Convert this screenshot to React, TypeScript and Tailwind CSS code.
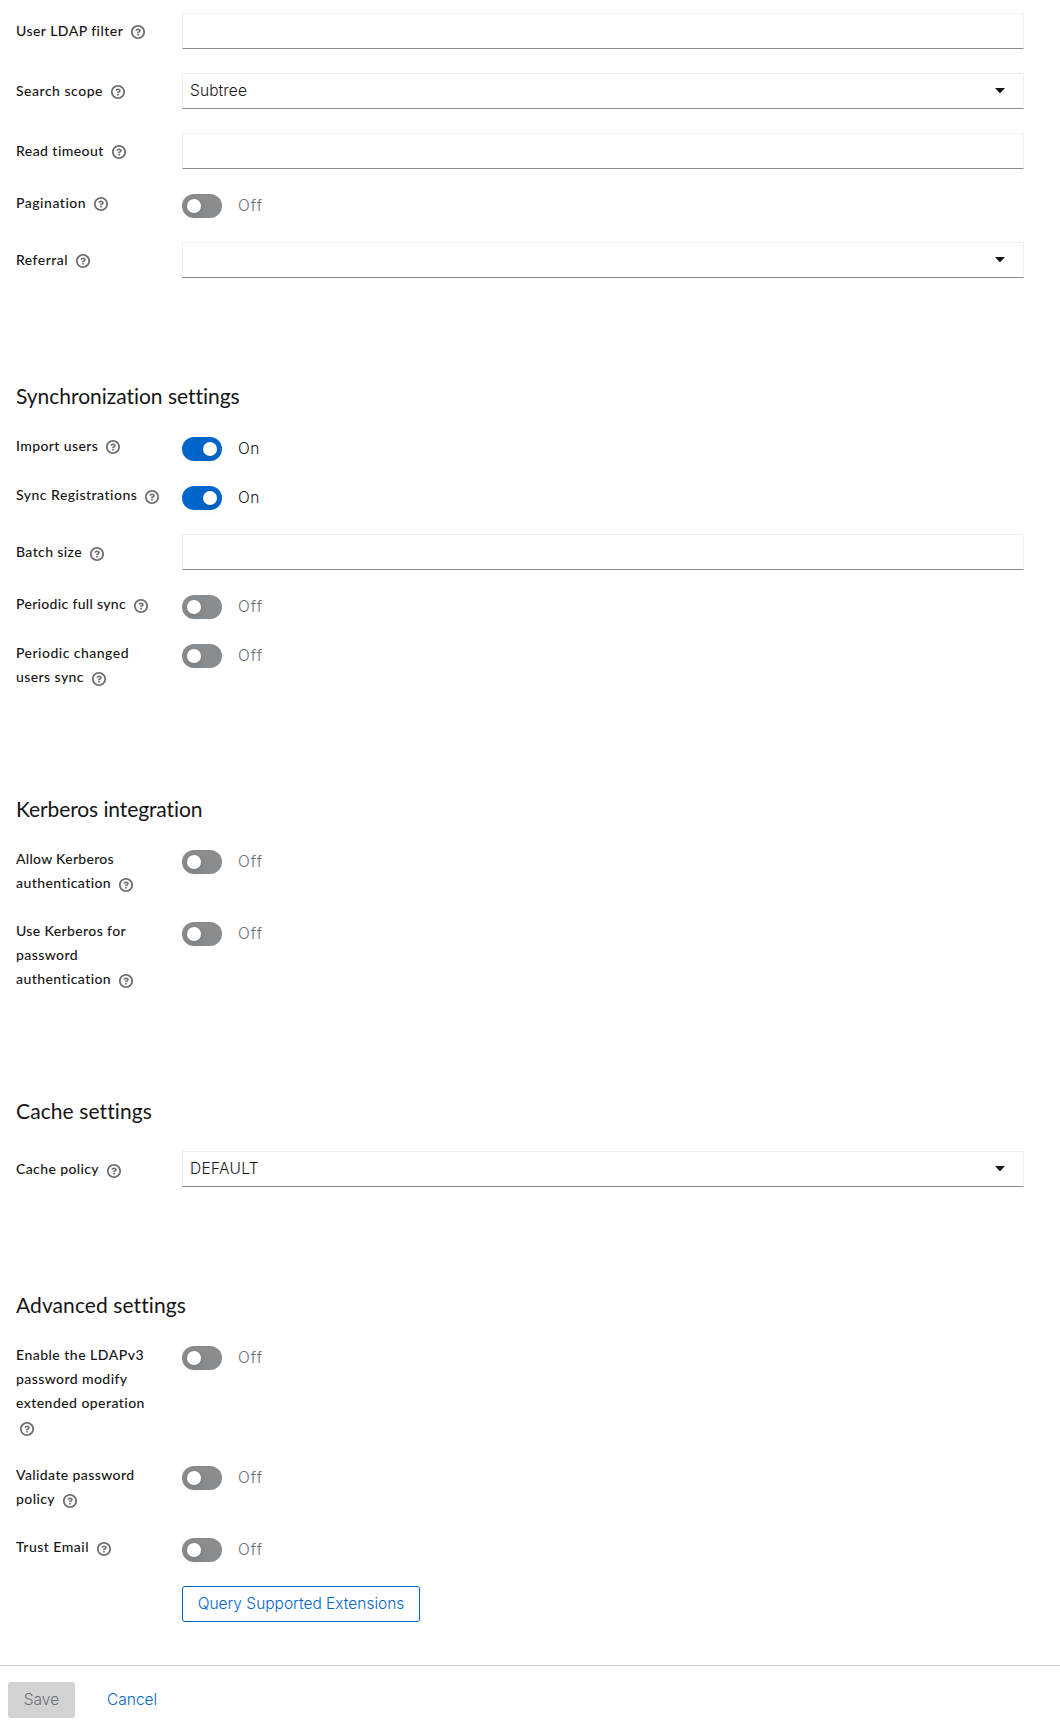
type Line = { text: string; tracking: string };
type Field =
  | { kind: 'input'; label: Line[]; iconTop: string }
  | { kind: 'select'; label: Line[]; iconTop: string; value?: Line }
  | { kind: 'switch'; label: Line[]; iconTop: string; on?: boolean; iconBelow?: boolean };

const HIGH = 'mt-[4px]';
const LOW = 'mt-[5px]';

const searching: Field[] = [
  { kind: 'input', label: [{ text: 'User LDAP filter', tracking: 'tracking-[0.46px]' }], iconTop: HIGH },
  {
    kind: 'select',
    label: [{ text: 'Search scope', tracking: 'tracking-[0.513px]' }],
    iconTop: HIGH,
    value: { text: 'Subtree', tracking: 'tracking-[0.12px]' },
  },
  { kind: 'input', label: [{ text: 'Read timeout', tracking: 'tracking-[0.44px]' }], iconTop: HIGH },
  { kind: 'switch', label: [{ text: 'Pagination', tracking: 'tracking-[0.52px]' }], iconTop: HIGH },
  { kind: 'select', label: [{ text: 'Referral', tracking: 'tracking-[0.459px]' }], iconTop: HIGH },
];

const synchronization: Field[] = [
  { kind: 'switch', on: true, label: [{ text: 'Import users', tracking: 'tracking-[0.39px]' }], iconTop: HIGH },
  { kind: 'switch', on: true, label: [{ text: 'Sync Registrations', tracking: 'tracking-[0.49px]' }], iconTop: LOW },
  { kind: 'input', label: [{ text: 'Batch size', tracking: 'tracking-[0.389px]' }], iconTop: LOW },
  { kind: 'switch', label: [{ text: 'Periodic full sync', tracking: 'tracking-[0.318px]' }], iconTop: LOW },
  {
    kind: 'switch',
    label: [
      { text: 'Periodic changed', tracking: 'tracking-[0.476px]' },
      { text: 'users sync', tracking: 'tracking-[0.422px]' },
    ],
    iconTop: LOW,
  },
];

const kerberos: Field[] = [
  {
    kind: 'switch',
    label: [
      { text: 'Allow Kerberos', tracking: 'tracking-[0.29px]' },
      { text: 'authentication', tracking: 'tracking-[0.42px]' },
    ],
    iconTop: LOW,
  },
  {
    kind: 'switch',
    label: [
      { text: 'Use Kerberos for', tracking: 'tracking-[0.378px]' },
      { text: 'password', tracking: 'tracking-[0.412px]' },
      { text: 'authentication', tracking: 'tracking-[0.42px]' },
    ],
    iconTop: LOW,
  },
];

const cache: Field[] = [
  {
    kind: 'select',
    label: [{ text: 'Cache policy', tracking: 'tracking-[0.387px]' }],
    iconTop: LOW,
    value: { text: 'DEFAULT', tracking: 'tracking-[0.3px]' },
  },
];

const advanced: Field[] = [
  {
    kind: 'switch',
    iconBelow: true,
    label: [
      { text: 'Enable the LDAPv3', tracking: 'tracking-[0.487px]' },
      { text: 'password modify', tracking: 'tracking-[0.417px]' },
      { text: 'extended operation', tracking: 'tracking-[0.45px]' },
    ],
    iconTop: LOW,
  },
  {
    kind: 'switch',
    label: [
      { text: 'Validate password', tracking: 'tracking-[0.401px]' },
      { text: 'policy', tracking: 'tracking-[0.406px]' },
    ],
    iconTop: LOW,
  },
  { kind: 'switch', label: [{ text: 'Trust Email', tracking: 'tracking-[0.486px]' }], iconTop: LOW },
];

function HelpIcon() {
  return (
    <svg width="14" height="14" viewBox="0 0 1024 1024" fill="#6a6e73" className="block">
      <path d="M521.3 576C627.5 576 713.7 502 713.7 413.7C713.7 325.4 627.6 253.6 521.3 253.6C366 253.6 334.5 337.7 329.2 407.2C329.2 414.3 335.2 416 343.5 416L445 416C450.5 416 458 415.5 460.8 406.5C460.8 362.6 582.9 357.1 582.9 413.6C582.9 441.9 556.2 470.9 521.3 473C486.4 475.1 447.3 479.8 447.3 521.7L447.3 553.8C447.3 570.8 456.1 576 472 576L521.3 576M575.3 751.3L575.3 655.3C575.3 646 568 639.3 559.3 639.3L463.3 639.3C454 639.3 447.3 646.5 447.3 655.3L447.3 751.3C447.3 760.5 454.5 767.3 463.3 767.3L559.3 767.3C568.5 767.3 575.3 760 575.3 751.3M512 896C300.2 896 128 723.9 128 512C128 300.3 300.2 128 512 128C723.8 128 896 300.2 896 512C896 723.8 723.7 896 512 896M512.1 0C229.7 0 0 229.8 0 512C0 794.2 229.8 1024 512.1 1024C794.4 1024 1024 794.3 1024 512C1024 229.7 794.4 0 512.1 0" />
    </svg>
  );
}

function Switch({ on }: { on?: boolean }) {
  return (
    <div className="flex items-center pt-px">
      <div
        className={
          on
            ? 'flex h-6 w-10 items-center justify-end rounded-full bg-[#0066cc] px-[5px]'
            : 'flex h-6 w-10 items-center rounded-full bg-[#8a8d90] px-[5px]'
        }
      >
        <span className="size-[14px] rounded-full bg-white shadow-[0_4px_8px_0_rgba(3,3,3,0.12)]" />
      </div>
      <span
        className={
          on
            ? "-mt-px ml-4 font-['Inter'] text-[15.5px] leading-6 font-light tracking-[0.5px] text-[#151515]"
            : "-mt-px ml-4 font-['Inter'] text-[15.5px] leading-6 font-light tracking-[1px] text-[#6a6e73]"
        }
      >
        {on ? 'On' : 'Off'}
      </span>
    </div>
  );
}

function Box({ value, caret }: { value?: Line; caret?: boolean }) {
  return (
    <div className="flex h-9 items-center justify-between border border-[#f0f0f0] border-b-[#8a8d90] bg-white pr-[18px] pl-[7px]">
      <span
        className={`-mt-px font-['Inter'] text-[15.5px] leading-6 font-light text-[#151515] ${value?.tracking ?? ''}`}
      >
        {value?.text}
      </span>
      {caret && (
        <svg width="10" height="5" viewBox="0 0 10 5" fill="#151515" className="-mt-px block">
          <path d="M0 0H10L5.6 4.7Q5 5.2 4.4 4.7Z" />
        </svg>
      )}
    </div>
  );
}

function FormRow({ field }: { field: Field }) {
  const isSwitch = field.kind === 'switch';
  const below = field.kind === 'switch' && field.iconBelow;
  return (
    <div className="grid grid-cols-[166px_842px]">
      <div className={isSwitch ? '' : 'pt-2'}>
        {field.label.map((line, i) => (
          <div key={line.text} className="flex h-6 items-start">
            <span className={`-mt-[2px] text-[14px] leading-6 font-medium whitespace-nowrap text-[#151515] ${line.tracking}`}>
              {line.text}
            </span>
            {!below && i === field.label.length - 1 && (
              <span className={`ml-2 ${field.iconTop}`}>
                <HelpIcon />
              </span>
            )}
          </div>
        ))}
        {below && (
          <div className="flex h-6 items-start">
            <span className={`ml-1 ${field.iconTop}`}>
              <HelpIcon />
            </span>
          </div>
        )}
      </div>
      <div>
        {field.kind === 'switch' && <Switch on={field.on} />}
        {field.kind === 'input' && <Box />}
        {field.kind === 'select' && <Box caret value={field.value} />}
      </div>
    </div>
  );
}

function Section({ title, tracking, fields }: { title?: string; tracking?: string; fields: Field[] }) {
  return (
    <section>
      {title && (
        <h2 className={`-mt-[3px] mb-[27px] h-[26px] text-[21px] leading-[26px] text-[#151515] ${tracking ?? ''}`}>
          {title}
        </h2>
      )}
      <div className="flex flex-col gap-6">
        {fields.map((f) => (
          <FormRow key={f.label[0].text} field={f} />
        ))}
      </div>
    </section>
  );
}

export default function App() {
  return (
    <div className="h-[1723px] w-[1060px] overflow-hidden bg-white font-['Lato',sans-serif]">
      <main className="flex flex-col gap-[108px] px-4 pt-[13px]">
        <Section fields={searching} />
        <Section title="Synchronization settings" tracking="tracking-[-0.03px]" fields={synchronization} />
        <Section title="Kerberos integration" tracking="tracking-[-0.1px]" fields={kerberos} />
        <Section title="Cache settings" tracking="tracking-[0.1px]" fields={cache} />
        <Section title="Advanced settings" tracking="tracking-[0.08px]" fields={advanced} />
      </main>
      <button className="mt-6 ml-[182px] flex h-9 w-[238px] items-center justify-center rounded-[3px] border border-[#0066cc] pb-px font-['Inter'] text-[15.5px] leading-6 font-light whitespace-nowrap text-[#0066cc]">
        Query Supported Extensions
      </button>
      <footer className="mt-[43px] flex border-t border-[#d2d2d2] px-2 pt-4 font-['Inter'] text-[15.5px] leading-6 font-light">
        <button className="h-9 w-[67px] rounded-[3px] bg-[#d2d2d2] pb-px text-[#6a6e73]">Save</button>
        <button className="ml-4 h-9 px-4 pb-px text-[#0066cc]">Cancel</button>
      </footer>
    </div>
  );
}
